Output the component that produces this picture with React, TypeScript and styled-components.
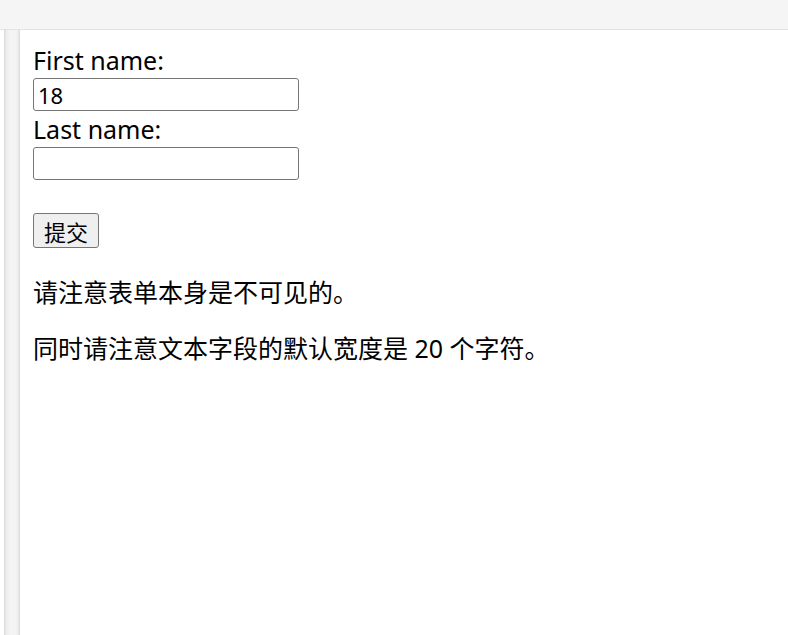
import React from "react";
import styled, { createGlobalStyle } from "styled-components";

const Global = createGlobalStyle`
  html, body { margin: 0; padding: 0; background: #f5f5f5; }
  body { font-family: "Noto Sans", "Noto Sans CJK SC", sans-serif; color: #000; }
  #root { width: 788px; height: 635px; overflow: hidden; }
`;

const TopBar = styled.div`
  height: 29px;
  background: #f5f5f5;
  border-bottom: 1px solid #e3e3e3;
`;

const Body = styled.div`
  display: flex;
  height: 605px;
`;

const Gutter = styled.div`
  width: 20px;
  display: flex;
  background: #ffffff;
  padding-left: 4px;
  box-sizing: border-box;
`;

const Strip = styled.div`
  flex: 1;
  background: linear-gradient(to right, #d6d6d6 0px, #ececec 2px, #f4f4f4 6px, #f4f4f4 12px, #e6e6e6 15px, #d3d3d3 16px);
`;

const Panel = styled.div`
  flex: 1;
  background: #ffffff;
  padding: 14px 0 0 13px;
  display: flex;
  flex-direction: column;
  align-items: flex-start;
`;

const Label = styled.label`
  font-size: 25px;
  line-height: 32px;
  height: 32px;
`;

const TextInput = styled.input`
  box-sizing: border-box;
  width: 266px;
  height: 33px;
  margin: 2px 0;
  border: 1px solid #767676;
  border-radius: 3px;
  padding: 0 4px;
  font-family: "Noto Sans", sans-serif;
  font-size: 22px;
  color: #000;
  background: #fff;
  outline: none;
`;

const SubmitButton = styled.button`
  box-sizing: border-box;
  margin-top: 31px;
  width: 66px;
  height: 35px;
  border: 1px solid #767676;
  border-radius: 3px;
  background: #efefef;
  font-family: "Noto Sans CJK SC", sans-serif;
  font-size: 22px;
  line-height: 1;
  padding: 0;
  color: #000;
`;

const Note = styled.p<{ $top: number }>`
  margin: ${(p) => p.$top}px 0 0 0;
  font-family: "Noto Sans", "Noto Sans CJK SC", sans-serif;
  font-size: 25px;
  line-height: 32px;
`;

export default function App() {
  return (
    <>
      <Global />
      <TopBar />
      <Body>
        <Gutter>
          <Strip />
        </Gutter>
        <Panel>
          <Label>First name:</Label>
          <TextInput type="text" defaultValue="18" />
          <Label>Last name:</Label>
          <TextInput type="text" />
          <SubmitButton type="button">提交</SubmitButton>
          <Note $top={28}>请注意表单本身是不可见的。</Note>
          <Note $top={24}>同时请注意文本字段的默认宽度是 20 个字符。</Note>
        </Panel>
      </Body>
    </>
  );
}
